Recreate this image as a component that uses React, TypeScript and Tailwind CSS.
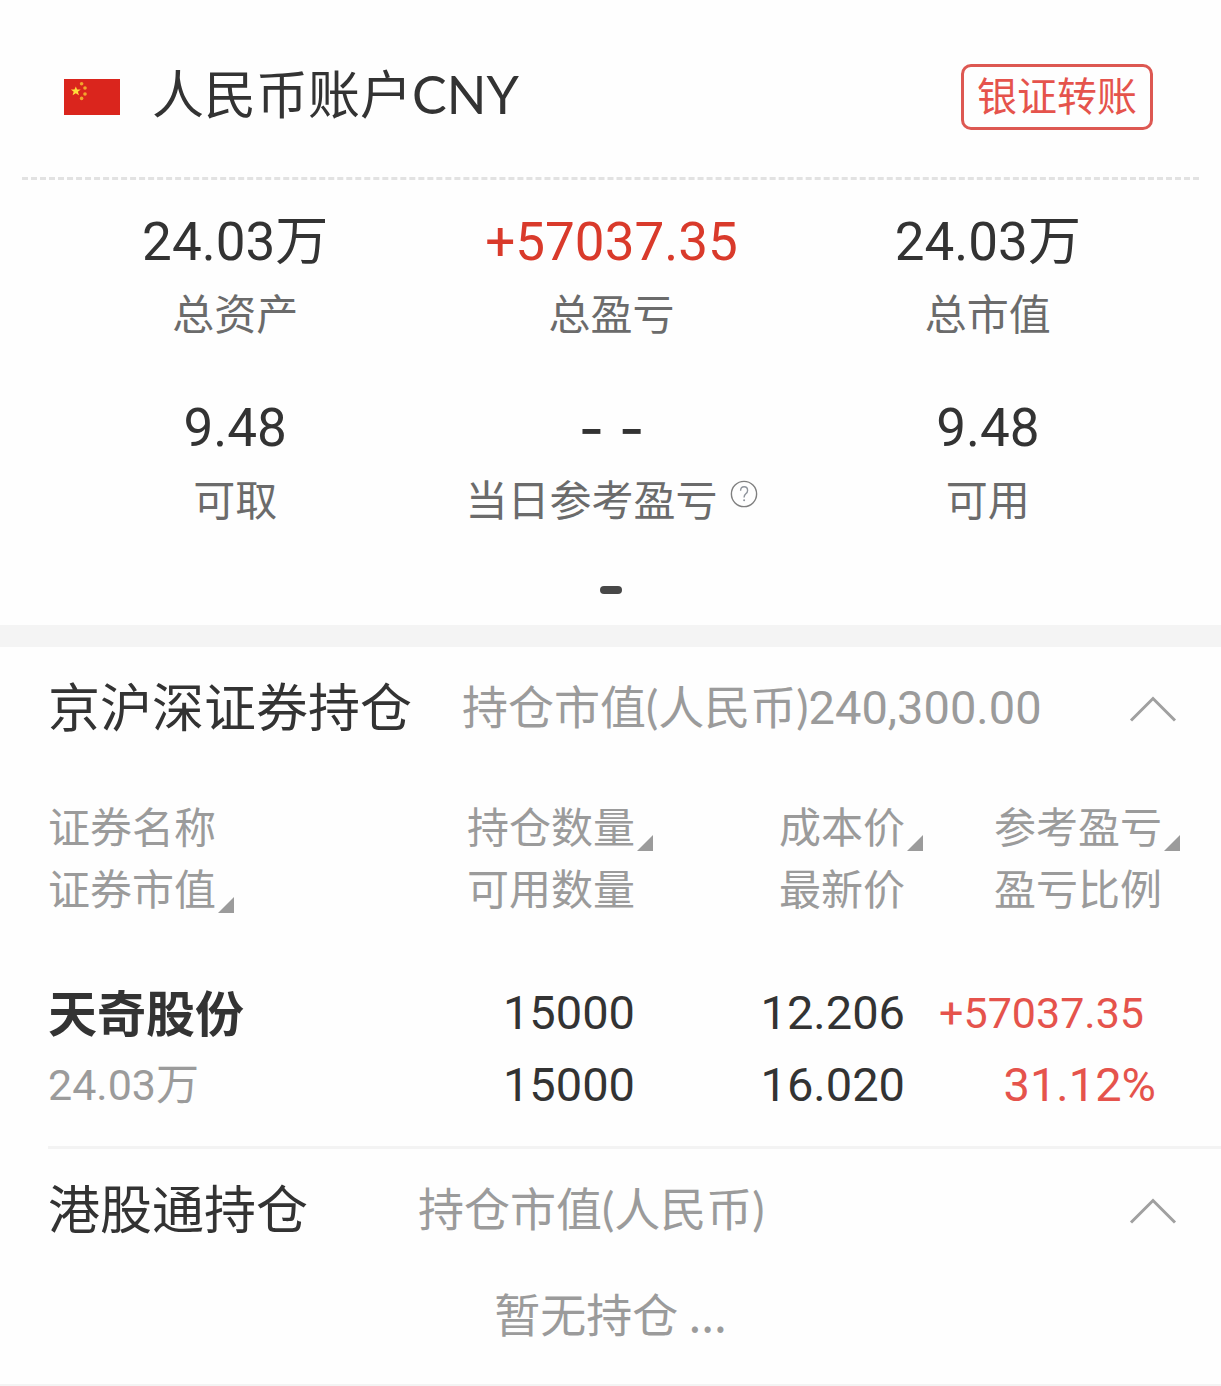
import React, { useState } from "react";

const numberFont = "font-['Roboto','Noto_Sans_CJK_SC',sans-serif]";

function Flag() {
  return (
    <svg className="h-9 w-14 shrink-0" viewBox="0 0 56 36" role="img" aria-label="中国">
      <rect width="56" height="36" fill="#da251d" />
      <path
        fill="#ffde3b"
        d="M11.8 7.6l1.300 3h3.600l-2.800 2.200 1.100 3.500-3.200-2-3.200 2 1.100-3.500-2.800-2.200h3.600z"
      />
      <g fill="#f2a52c">
        <circle cx="17.6" cy="4.8" r="1.8" />
        <circle cx="21" cy="9" r="1.8" />
        <circle cx="21" cy="15" r="1.8" />
        <circle cx="17.6" cy="19.4" r="1.8" />
      </g>
    </svg>
  );
}

function Help() {
  return (
    <svg className="size-7" viewBox="0 0 28 28" fill="none" aria-hidden="true">
      <circle cx="14" cy="14" r="12.6" stroke="#7f7f7f" strokeWidth="1.4" />
      <path
        d="M10.600 10.800c0-2.400 1.400-4 3.500-4s3.500 1.400 3.500 3.600c0 1.600-.8 2.500-1.800 3.400-1.100 1-1.700 1.700-1.700 3.400v.4"
        stroke="#8f949c"
        strokeWidth="1.4"
      />
      <circle cx="14.1" cy="20.2" r="1" fill="#8f949c" />
    </svg>
  );
}

function Stat({
  value,
  label,
  red = false,
}: {
  value: React.ReactNode;
  label: React.ReactNode;
  red?: boolean;
}) {
  return (
    <div className="flex flex-col items-center">
      <dd
        className={`order-1 h-18 text-[53px] leading-18 ${numberFont} ${
          red ? "text-[#d93a2b]" : "text-[#333333]"
        }`}
      >
        {value}
      </dd>
      <dt className="order-2 flex h-18 text-[42px] leading-17 text-[#6b6b6b]">{label}</dt>
    </div>
  );
}

function SectionHeader({
  title,
  children,
  open,
  onToggle,
  wide = false,
}: {
  title: string;
  children: React.ReactNode;
  open: boolean;
  onToggle: () => void;
  wide?: boolean;
}) {
  return (
    <header className="flex h-[124px] items-center pr-11 pl-12">
      <h2 className="pb-2 text-[52px] leading-18 text-[#333333]">{title}</h2>
      <p
        className={`flex-1 pb-1 font-['Lato','Noto_Sans_CJK_SC',sans-serif] text-[46px] leading-18 whitespace-nowrap text-[#9b9b9b] ${
          wide ? "pl-[110px]" : "pl-[50px]"
        }`}
      >
        {children}
      </p>
      <button type="button" aria-label={title} aria-expanded={open} onClick={onToggle}>
        <svg
          className={`h-7 w-12 ${open ? "" : "rotate-180"}`}
          viewBox="0 0 48 28"
          fill="none"
          stroke="#a0a0a0"
          strokeWidth="3"
        >
          <path d="M2 25.500L24 3.500L46 25.500" />
        </svg>
      </button>
    </header>
  );
}

function SortLabel({ children }: { children: string }) {
  return (
    <button type="button" className="flex h-[62px] items-end">
      <span className="h-[62px] leading-14">{children}</span>
      <svg className="mb-2 ml-0.5 size-4" viewBox="0 0 16 16" fill="#9b9b9b" aria-hidden="true">
        <path d="M16 0v16H0z" />
      </svg>
    </button>
  );
}

function HeadCell({ first, second }: { first: string; second: string }) {
  return (
    <th scope="col" className="p-0 font-normal">
      <div className="flex flex-col items-end whitespace-nowrap">
        <SortLabel>{first}</SortLabel>
        <span className="h-[62px] pr-[18px] leading-14">{second}</span>
      </div>
    </th>
  );
}

export default function App() {
  const [mainOpen, setMainOpen] = useState(true);
  const [hkOpen, setHkOpen] = useState(true);

  return (
    <main className="w-full bg-[#fefefe] font-['Noto_Sans_CJK_SC',sans-serif] text-[#333333]">
      <section>
        <header className="mx-[22px] flex h-[180px] items-center border-b-3 border-dashed border-[#e2e2e2] pt-4 pr-[46px] pl-[42px]">
          <Flag />
          <h1 className="flex-1 pb-2 pl-8 text-[52px] leading-18">
            人民币账户<span className="font-['Lato',sans-serif]">CNY</span>
          </h1>
          <button
            type="button"
            className="h-[66px] rounded-[10px] border-3 border-[#dd5852] px-[13px] pb-1.5 text-[40px] leading-[54px] text-[#e5534c]"
          >
            银证转账
          </button>
        </header>

        <dl className="grid grid-cols-3 gap-y-[42px] pt-[26px] pr-[45px] pl-[47px]">
          <Stat value="24.03万" label="总资产" />
          <Stat value="+57037.35" label="总盈亏" red />
          <Stat value="24.03万" label="总市值" />
          <Stat value="9.48" label="可取" />
          <Stat
            value={
              <span className="flex gap-4 font-['Noto_Sans_CJK_SC',sans-serif] text-[70px] leading-[58px]">
                <span>-</span>
                <span>-</span>
              </span>
            }
            label={
              <>
                当日参考盈亏
                <button type="button" aria-label="说明" className="mt-4 ml-3 size-7">
                  <Help />
                </button>
              </>
            }
          />
          <Stat value="9.48" label="可用" />
        </dl>

        <div className="flex justify-center pt-[50px] pb-[31px]">
          <span className="h-2 w-[22px] rounded-full bg-[#484848]" />
        </div>
      </section>

      <div className="h-[22px] bg-[#f4f4f4]" />

      <section>
        <SectionHeader
          title="京沪深证券持仓"
          open={mainOpen}
          onToggle={() => setMainOpen(!mainOpen)}
        >
          持仓市值(人民币)<span className={`text-[47px] ${numberFont}`}>240,300.00</span>
        </SectionHeader>

        {mainOpen && (
          <div className="pt-[26px] pr-[41px] pb-[25px] pl-12">
            <table className="w-full table-fixed border-collapse">
              <colgroup>
                <col />
                <col className="w-[306px]" />
                <col className="w-[270px]" />
                <col className="w-[257px]" />
              </colgroup>
              <thead className="text-[42px] text-[#9b9b9b]">
                <tr>
                  <th scope="col" className="p-0 font-normal">
                    <div className="flex flex-col items-start whitespace-nowrap">
                      <span className="h-[62px] leading-14">证券名称</span>
                      <SortLabel>证券市值</SortLabel>
                    </div>
                  </th>
                  <HeadCell first="持仓数量" second="可用数量" />
                  <HeadCell first="成本价" second="最新价" />
                  <HeadCell first="参考盈亏" second="盈亏比例" />
                </tr>
              </thead>
              <tbody className={`text-right text-[47px] leading-18 whitespace-nowrap ${numberFont}`}>
                <tr>
                  <td className="p-0 pt-14 text-left">
                    <div className="h-18 font-['Noto_Sans_CJK_SC',sans-serif] text-[49px] leading-17 font-bold">
                      天奇股份
                    </div>
                    <div className="h-18 text-[43px] text-[#9b9b9b]">24.03万</div>
                  </td>
                  <td className="p-0 pt-14 pr-[18px]">
                    <div className="h-18">15000</div>
                    <div className="h-18">15000</div>
                  </td>
                  <td className="p-0 pt-14 pr-[18px]">
                    <div className="h-18">12.206</div>
                    <div className="h-18">16.020</div>
                  </td>
                  <td className="p-0 pt-14 text-[#e5534c]">
                    <div className="h-18 pr-9 text-[43px]">+57037.35</div>
                    <div className="h-18 pr-6">31.12%</div>
                  </td>
                </tr>
              </tbody>
            </table>
          </div>
        )}
      </section>

      <hr className="ml-12 border-t-3 border-[#f3f3f3]" />

      <section className="border-b-2 border-[#f3f3f3]">
        <SectionHeader
          title="港股通持仓"
          open={hkOpen}
          onToggle={() => setHkOpen(!hkOpen)}
          wide
        >
          持仓市值(人民币)
        </SectionHeader>
        {hkOpen && (
          <p className="pt-[3px] pb-9 text-center text-[46px] leading-18 text-[#9b9b9b]">
            暂无持仓 ...
          </p>
        )}
      </section>
    </main>
  );
}
